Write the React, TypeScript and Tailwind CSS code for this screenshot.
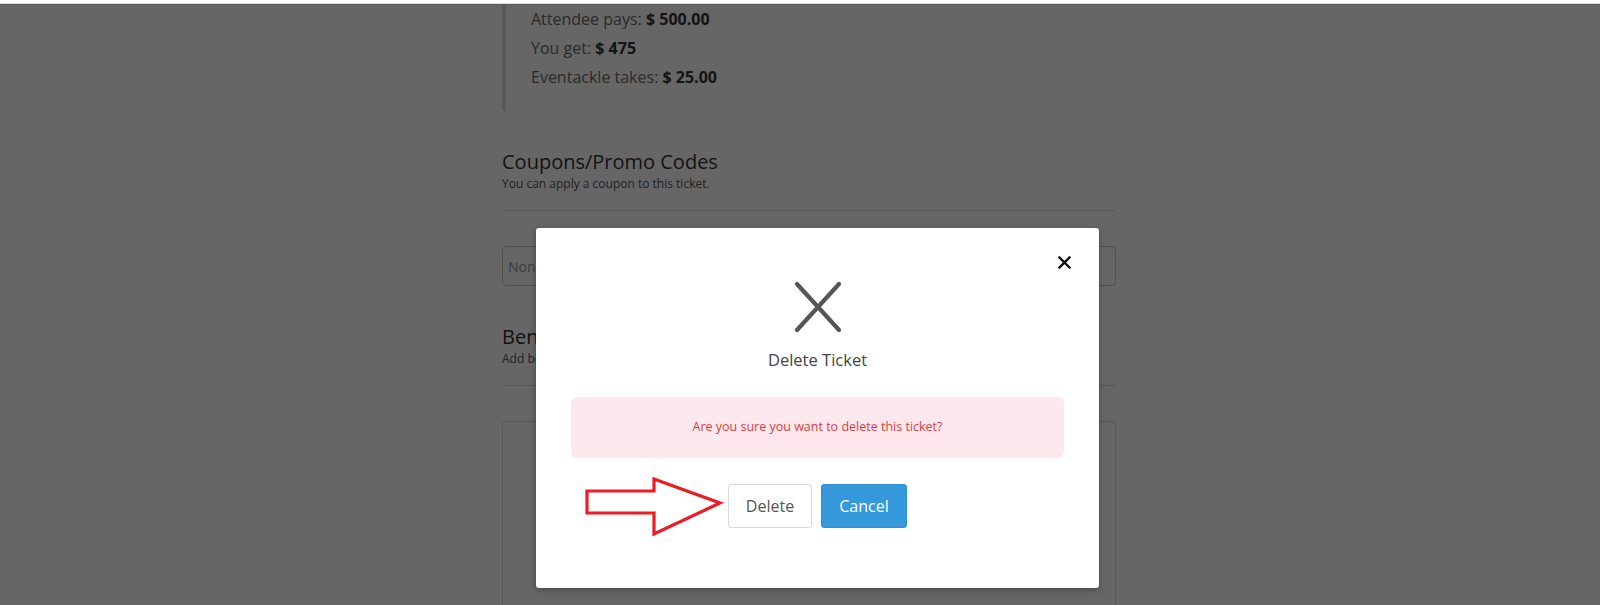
import React from 'react';

const fees = [
  { label: 'Attendee pays:', value: '$ 500.00' },
  { label: 'You get:', value: '$ 475' },
  { label: 'Eventackle takes:', value: '$ 25.00' },
];

function Section({ title, subtitle, children }: { title: string; subtitle: string; children: React.ReactNode }) {
  return (
    <div className="mt-[39px]">
      <h3 className="text-[20px] leading-[24px] text-[#333]">{title}</h3>
      <p className="mt-[2px] text-[12px] leading-[16px] text-[#555]">{subtitle}</p>
      <div className="mt-[18px] h-px bg-[#dcdcdc]" />
      <div className="mt-[35px]">{children}</div>
    </div>
  );
}

function DeleteModal() {
  return (
    <div className="absolute left-[536px] top-[223px] flex h-[360px] w-[563px] flex-col items-center rounded-[3px] bg-white shadow-[0_2px_6px_rgba(0,0,0,0.3)]">
      <button className="absolute left-[521px] top-[27px] flex h-[14px] w-[14px] items-center justify-center">
        <svg width="13" height="13" viewBox="0 0 13 13">
          <path d="M1.5 1.5 L11.5 11.5 M11.5 1.5 L1.5 11.5" stroke="#111" strokeWidth="2.4" strokeLinecap="square" />
        </svg>
      </button>

      <svg className="mt-[53px]" width="48" height="52" viewBox="0 0 48 52">
        <path d="M3 3 L45 49 M45 3 L3 49" stroke="#555" strokeWidth="4.2" strokeLinecap="round" />
      </svg>

      <h2 className="mt-[16px] text-[16.5px] leading-[22px] text-[#444]">Delete Ticket</h2>

      <div className="mt-[26px] flex h-[61px] w-[493px] items-center justify-center rounded-[6px] bg-[#fde9ed]">
        <p className="text-[12.5px] text-[#e5393f]">Are you sure you want to delete this ticket?</p>
      </div>

      <div className="mt-[26px] flex gap-[9px]">
        <button className="h-[44px] w-[84px] rounded-[3px] border border-[#dadada] bg-white text-[16px] text-[#555]">Delete</button>
        <button className="h-[44px] w-[86px] rounded-[3px] border border-[#2f8fd0] bg-[#3598db] text-[16px] text-white">Cancel</button>
      </div>

      {/* annotation arrow pointing at the Delete button */}
      <svg className="absolute left-[48px] top-[248px]" width="142" height="62" viewBox="0 0 142 62">
        <polygon
          points="3,15 70,15 70,3 136,27 70,58 70,37 3,37"
          fill="none"
          stroke="#ec1c24"
          strokeWidth="3.2"
          strokeLinejoin="miter"
        />
      </svg>
    </div>
  );
}

export default function App() {
  return (
    <div className="h-[605px] w-[1600px] overflow-hidden bg-white font-['Open_Sans',sans-serif]">
      <div className="h-[3px] bg-white" />
      <div className="h-px bg-[#dcdce2]" />
      <div className="h-px bg-[#5a5a5a]" />
      <div className="relative h-[600px] overflow-hidden bg-white">
        <div className="ml-[502px] w-[614px]">
          <div className="rounded-bl-[3px] border-l-[4px] border-[#e0e0e0] pb-[19px] pl-[25px]">
            {fees.map((f) => (
              <p key={f.label} className="text-[16px] leading-[29px] text-[#6b6b6b]">
                {f.label} <span className="font-bold text-[#333]">{f.value}</span>
              </p>
            ))}
          </div>

          <Section title="Coupons/Promo Codes" subtitle="You can apply a coupon to this ticket.">
            <div className="flex h-[40px] items-center rounded-[4px] border border-[#ccc] pl-[5px] text-[14px] text-[#999]">None</div>
          </Section>

          <Section title="Benefits" subtitle="Add benefits to this ticket.">
            <div className="h-[300px] rounded-[4px] border border-[#ddd]" />
          </Section>
        </div>

        <div className="absolute inset-0 bg-black/60" />
        <DeleteModal />
      </div>
    </div>
  );
}
